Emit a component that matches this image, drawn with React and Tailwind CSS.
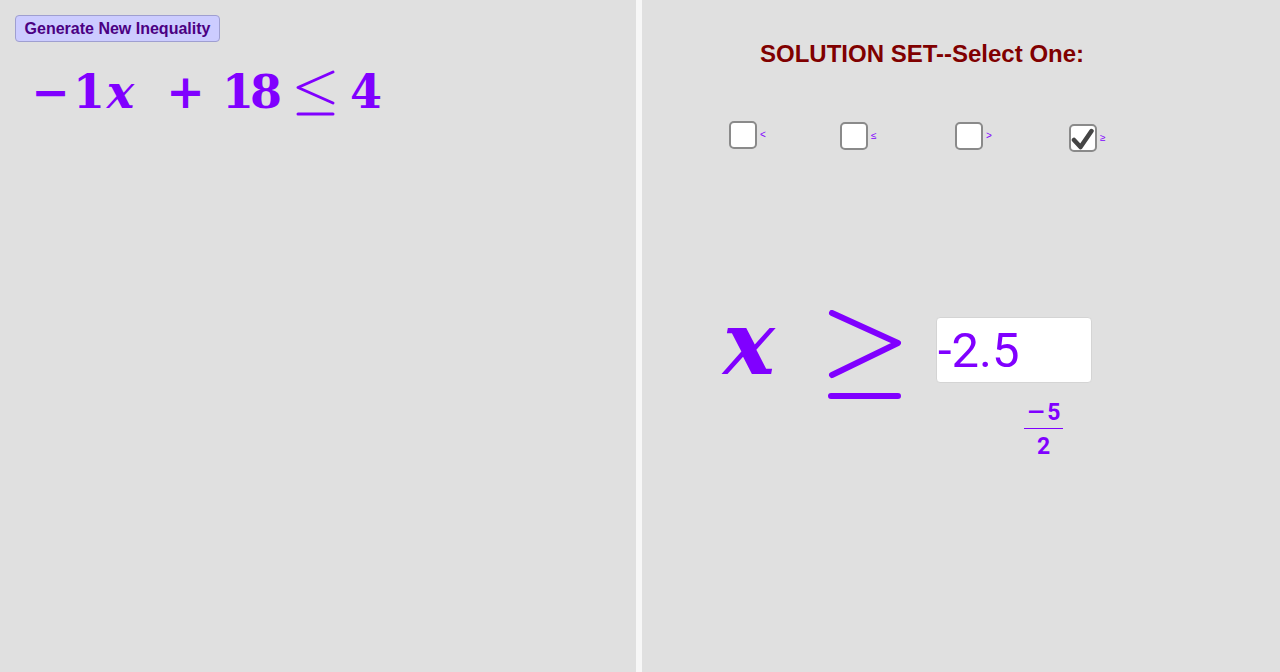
import React from "react";

function Box({ checked }) {
  return (
    <div className="w-[28px] h-[28px] border-2 border-[#8a8a8a] rounded-[5px] bg-white flex-none">
      {checked && (
        <svg width="24" height="24" viewBox="0 0 24 24" className="block">
          <path d="M3 14 L9.5 21 L20.5 5" fill="none" stroke="#444" strokeWidth="4.5" strokeLinecap="round" strokeLinejoin="round" />
        </svg>
      )}
    </div>
  );
}

function Item({ w, mt, label, checked }) {
  return (
    <div className={`flex items-center ${w} ${mt}`}>
      <Box checked={checked} />
      <span className="ml-[3px] text-[10px] leading-none text-[#8000ff] font-['Liberation_Sans',sans-serif]">{label}</span>
    </div>
  );
}

export default function App() {
  return (
    <div className="w-[1280px] h-[672px] flex bg-[#e0e0e0] overflow-hidden">
      {/* Left panel */}
      <div className="w-[636px] h-full pt-[15px] pl-[15px] flex flex-col items-start">
        <button className="h-[27px] w-[205px] bg-[#ccccff] border border-[#9f9fd0] rounded-[4px] text-[#4b0082] font-bold text-[16px] leading-none font-['Liberation_Sans',Arial,sans-serif] flex items-center justify-center">
          Generate New Inequality
        </button>
        <div className="mt-[27px] ml-[13px] flex items-start text-[#8000ff] font-['DejaVu_Serif',serif] font-bold text-[46px] leading-none">
          <span className="w-[45px] text-center">−</span>
          <span className="w-[32px] text-center">1</span>
          <span className="w-[31px] text-center italic">x</span>
          <span className="ml-[14px] w-[71px] text-center">+</span>
          <span className="w-[58px] text-center tracking-[-4px]">18</span>
          <svg width="40" height="48" viewBox="0 0 40 48" className="ml-[17px] mt-[1px] flex-none">
            <path d="M37 2 L2 17.5 L37 33 M2 44 L37 44" fill="none" stroke="#8000ff" strokeWidth="3" strokeLinecap="round" strokeLinejoin="round" />
          </svg>
          <span className="ml-[14px] w-[31px] text-center">4</span>
        </div>
      </div>

      {/* Divider */}
      <div className="w-[6px] h-full bg-[#f7f7f7]" />

      {/* Right panel */}
      <div className="flex-1 h-full flex flex-col items-start">
        <div className="mt-[40px] ml-[118px] text-[24px] leading-[28px] font-bold text-[#800000] font-['Liberation_Sans',Arial,sans-serif] whitespace-nowrap">
          SOLUTION SET--Select One:
        </div>
        <div className="mt-[53px] ml-[87px] flex items-start">
          <Item w="w-[111px]" mt="mt-0" label="<" />
          <Item w="w-[115px]" mt="mt-[1px]" label="≤" />
          <Item w="w-[114px]" mt="mt-[1px]" label=">" />
          <Item w="w-[40px]" mt="mt-[3px]" label="≥" checked />
        </div>
        <div className="mt-[136px] ml-[81px] flex items-start">
          <div className="w-[103px] mt-[12px] text-[87px] leading-none font-bold italic text-[#8000ff] font-['DejaVu_Serif',serif]">
            x
          </div>
          <svg width="76" height="92" viewBox="0 0 76 92" className="mt-[22px] flex-none">
            <path d="M6 3 L72 33 L6 65 M5 86 L72 86" fill="none" stroke="#8000ff" strokeWidth="6" strokeLinecap="round" strokeLinejoin="round" />
          </svg>
          <div className="ml-[34px] mt-[29px] flex flex-col items-start">
            <div className="w-[156px] h-[66px] bg-white rounded-[4px] border border-[#d4d4d4] flex items-center pl-[1px]">
              <span className="text-[49px] leading-none text-[#8000ff] font-['Roboto',sans-serif]">-2.5</span>
            </div>
            <div className="ml-[88px] mt-[18px] w-[39px] flex flex-col items-center text-[#8000ff] font-['Roboto',sans-serif] font-bold text-[23px] leading-[23px]">
              <div className="flex items-center pl-[3px]">
                <span className="inline-block scale-x-150 mr-[5px]">−</span>
                <span>5</span>
              </div>
              <div className="mt-[4px] w-[39px] h-[1px] bg-[#8000ff]" />
              <span className="mt-[6px]">2</span>
            </div>
          </div>
        </div>
      </div>
    </div>
  );
}
